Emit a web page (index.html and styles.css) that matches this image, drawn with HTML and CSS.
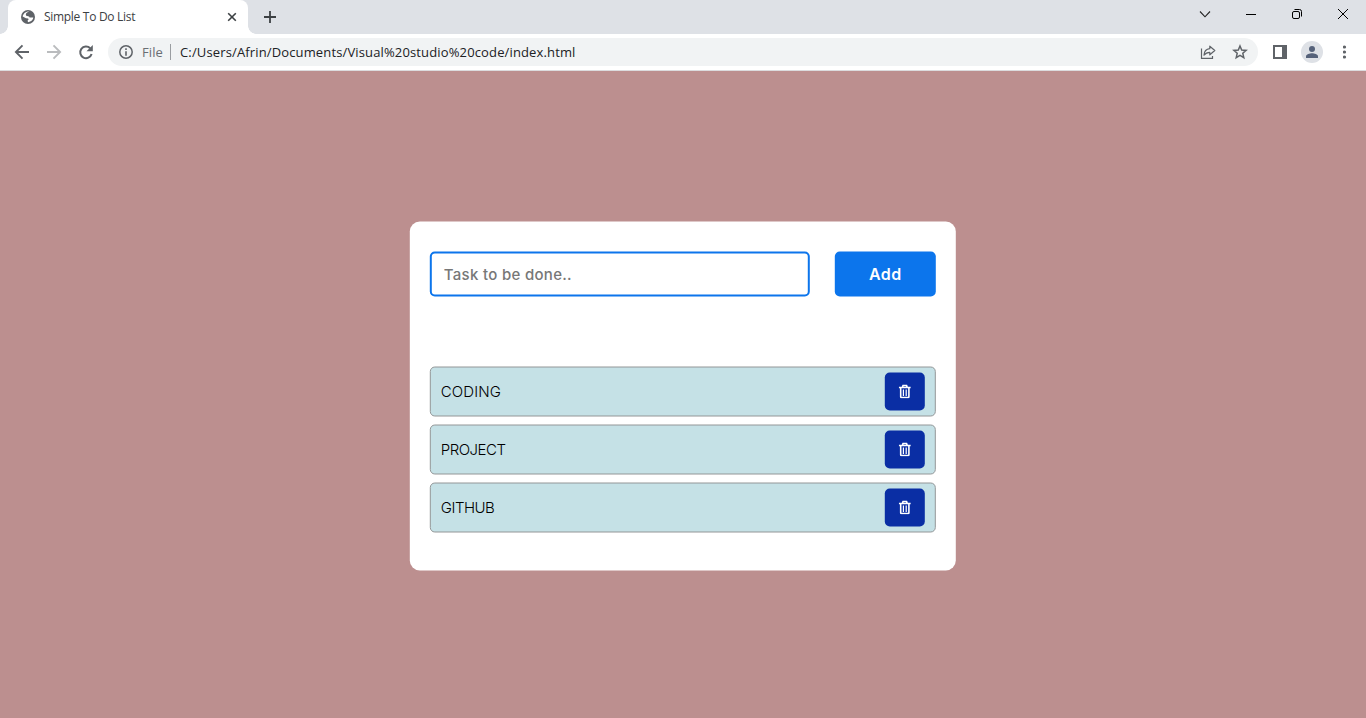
FILE: index.html
```
<!DOCTYPE html>
<html lang="en">
<head>
<meta charset="utf-8">
<title>Simple To Do List</title>
<link rel="stylesheet" href="styles.css">
</head>
<body>
<header class="tabstrip">
  <div class="tab">
    <svg class="globe" width="14" height="14" viewBox="0 0 14 14"><circle cx="7" cy="7" r="7" fill="#5f6368"/><path d="M8.3 1.6C6.5 2 5.2 3 4.8 4.2L5.2 5.8 8 6.4 8.6 7.4 12.3 7.6C12.2 9.6 10.3 12 7 12.3L6.6 10.6 7.6 9.6 7.2 8.4 5 8.3 1.7 6.6C2 4.2 4.3 1.5 8.3 1.6Z" fill="#fff"/><path d="M5.6 4.6 7 3.2 9.3 3.6 9.6 2.4 11.7 4.4 11.3 5.6 9 6.1 6.4 5.8Z" fill="#5f6368"/></svg>
    <span class="tab-title">Simple To Do List</span>
    <svg class="tab-close" width="10" height="10" viewBox="0 0 10 10"><path d="M1.2 1.2 8.8 8.8M8.8 1.2 1.2 8.8" stroke="#3c4043" stroke-width="1.6"/></svg>
  </div>
  <svg class="new-tab" width="12" height="12" viewBox="0 0 12 12"><path d="M6 0V12M0 6H12" stroke="#3c4043" stroke-width="1.8"/></svg>
  <div class="window-controls">
    <svg width="46" height="28" viewBox="0 0 46 28"><path d="M18 11.5 23 16.8 28 11.5" fill="none" stroke="#222" stroke-width="1.1"/></svg>
    <svg width="46" height="28" viewBox="0 0 46 28"><path d="M18 14.5H28" stroke="#000"/></svg>
    <svg width="46" height="28" viewBox="0 0 46 28" fill="none" stroke="#000"><rect x="18.5" y="11.5" width="7" height="7" rx="1.5"/><path d="M20.5 9.5H25.5Q27.5 9.5 27.5 11.5V16.5"/></svg>
    <svg width="46" height="28" viewBox="0 0 46 28"><path d="M18 9 28 19M28 9 18 19" stroke="#000"/></svg>
  </div>
</header>
<nav class="toolbar">
  <svg class="nav-icon" width="32" height="32" viewBox="0 0 32 32"><path d="M23 16H10.5M16.5 9.4 9.9 16 16.5 22.6" fill="none" stroke="#5f6368" stroke-width="1.9"/></svg>
  <svg class="nav-icon" width="32" height="32" viewBox="0 0 32 32"><path d="M9 16H21.5M15.5 9.4 22.1 16 15.5 22.6" fill="none" stroke="#babcbe" stroke-width="1.9"/></svg>
  <svg class="nav-icon" width="32" height="32" viewBox="0 0 32 32"><path d="M20.2 12.3A5.8 5.8 0 1 0 21.6 18" fill="none" stroke="#5f6368" stroke-width="2"/><path d="M22.8 8.9V15.2H16.5Z" fill="#5f6368"/></svg>
  <div class="omnibox">
    <svg width="14" height="14" viewBox="0 0 14 14"><circle cx="7" cy="7" r="6.2" fill="none" stroke="#5f6368" stroke-width="1.5"/><path d="M7 6.2V10.7M7 3.3V5" stroke="#5f6368" stroke-width="1.6"/></svg>
    <span class="scheme">File</span>
    <span class="divider"></span>
    <span class="url">C:/Users/Afrin/Documents/Visual%20studio%20code/index.html</span>
    <div class="omnibox-actions">
      <svg width="16" height="16" viewBox="0 0 16 16" fill="none" stroke="#5f6368" stroke-width="1.2"><path d="M1.5 4.5V14.4H12.5V12"/><path d="M9.8 2.2 14.8 6.5 9.8 10.8V8.3C7.3 8.3 5.5 9.2 4 11.2 4.2 7.7 6.2 5.1 9.8 4.7Z" stroke-linejoin="round"/></svg>
      <svg width="16" height="16" viewBox="0 0 16 16"><path d="M8 2 9.7 6.1 14.1 6.4 10.8 9.3 11.8 13.7 8 11.4 4.2 13.7 5.2 9.3 1.9 6.4 6.3 6.1Z" fill="none" stroke="#5f6368" stroke-width="1.5"/></svg>
    </div>
  </div>
  <div class="toolbar-actions">
    <svg width="14" height="14" viewBox="0 0 14 14"><path fill-rule="evenodd" d="M0 0H14V14H0ZM2 2V12H9V2Z" fill="#5f6368"/></svg>
    <svg width="22" height="22" viewBox="0 0 22 22"><circle cx="11" cy="11" r="11" fill="#dee1e6"/><circle cx="11" cy="8" r="3" fill="#56627a"/><path d="M5 17V15.3C5 13.3 8.8 12.3 11 12.3S17 13.3 17 15.3V17Z" fill="#56627a"/></svg>
    <svg width="4" height="14" viewBox="0 0 4 14" fill="#5f6368"><circle cx="1.5" cy="2" r="1.6"/><circle cx="1.5" cy="7" r="1.6"/><circle cx="1.5" cy="12" r="1.6"/></svg>
  </div>
</nav>
<main class="page">
  <section class="card">
    <form class="new-task">
      <input class="task-input" type="text" placeholder="Task to be done..">
      <button class="add" type="button">Add</button>
    </form>
    <ul class="tasks">
      <li class="task"><span class="name coding">CODING</span><button class="delete" aria-label="Delete"><svg width="12" height="14" viewBox="0 0 12 14"><path d="M0 3H12M3.6 2.8 4.3 .9H7.7L8.4 2.8M1.9 3.5V12.3Q1.9 13 2.6 13H9.4Q10.1 13 10.1 12.3V3.5" fill="none" stroke="#fff" stroke-width="1.6"/><path d="M4.6 5V11.5M7.4 5V11.5" stroke="#fff" stroke-width="1.2"/></svg></button></li>
      <li class="task"><span class="name project">PROJECT</span><button class="delete" aria-label="Delete"><svg width="12" height="14" viewBox="0 0 12 14"><path d="M0 3H12M3.6 2.8 4.3 .9H7.7L8.4 2.8M1.9 3.5V12.3Q1.9 13 2.6 13H9.4Q10.1 13 10.1 12.3V3.5" fill="none" stroke="#fff" stroke-width="1.6"/><path d="M4.6 5V11.5M7.4 5V11.5" stroke="#fff" stroke-width="1.2"/></svg></button></li>
      <li class="task"><span class="name github">GITHUB</span><button class="delete" aria-label="Delete"><svg width="12" height="14" viewBox="0 0 12 14"><path d="M0 3H12M3.6 2.8 4.3 .9H7.7L8.4 2.8M1.9 3.5V12.3Q1.9 13 2.6 13H9.4Q10.1 13 10.1 12.3V3.5" fill="none" stroke="#fff" stroke-width="1.6"/><path d="M4.6 5V11.5M7.4 5V11.5" stroke="#fff" stroke-width="1.2"/></svg></button></li>
    </ul>
  </section>
</main>
</body>
</html>
```
FILE: styles.css
```
* { box-sizing: border-box; }
body { margin: 0; height: 718px; display: flex; flex-direction: column; overflow: hidden; font-family: "Open Sans", "Noto Sans", sans-serif; }
svg { display: block; flex: none; }
.tabstrip { height: 34px; flex: none; background: #dee1e6; display: flex; align-items: flex-start; padding-left: 8px; }
.tab { position: relative; width: 240px; height: 34px; background: #fff; border-radius: 8px 8px 0 0; display: flex; align-items: center; padding: 0 11px 0 13px; }
.tab::before, .tab::after { content: ""; position: absolute; bottom: 0; width: 8px; height: 8px; }
.tab::before { left: -8px; background: radial-gradient(circle at 0 0, transparent 7.5px, #fff 8px); }
.tab::after { right: -8px; background: radial-gradient(circle at 100% 0, transparent 7.5px, #fff 8px); }
.tab-title { margin-left: 9px; padding-bottom: 2px; font-size: 12px; letter-spacing: -0.3px; color: #3c4043; white-space: nowrap; }
.tab-close { margin-left: auto; }
.new-tab { margin: 11px 0 0 16px; }
.window-controls { display: flex; margin-left: auto; }
.toolbar { height: 37px; flex: none; background: #fff; border-bottom: 1px solid #dcdcde; display: flex; align-items: center; padding: 0 19px 0 6px; }
.omnibox { flex: 1; height: 28px; margin: 0 15px 0 6px; border-radius: 14px; background: #f1f3f4; display: flex; align-items: center; padding: 0 10px 0 11px; white-space: nowrap; }
.scheme { width: 28px; margin-left: 9px; font-size: 13px; letter-spacing: 0.1px; color: #6a6e73; }
.divider { width: 1px; height: 16px; background: #9a9da1; }
.url { margin-left: 9px; font-size: 13px; letter-spacing: 0.14px; color: #202124; }
.omnibox-actions { margin-left: auto; display: flex; gap: 16px; }
.toolbar-actions { display: flex; align-items: center; gap: 14px; }
.toolbar-actions svg:last-child { margin-left: 6px; }
.page { flex: 1; background: #bc8f8f; padding-top: 151px; font-family: Inter, sans-serif; }
.card { width: 546px; height: 349px; margin: 0 auto; padding: 30px 20px; border-radius: 10px; background: #fff; transform: translate(-0.2px, -0.5px); }
.new-task { display: flex; justify-content: space-between; height: 45px; margin: 0; }
.task-input { width: 380px; height: 45px; border: 2px solid #0c75ec; border-radius: 5px; padding: 0 12px; outline: none; font: 500 15px Inter, sans-serif; letter-spacing: 0.3px; color: #222; background: #fff; }
.task-input::placeholder { color: #777; opacity: 1; }
.add { width: 101px; height: 45px; border: 0; border-radius: 5px; background: #0c75ec; color: #fff; padding: 0 0 2px; font: 600 16px Inter, sans-serif; letter-spacing: 0.4px; }
.tasks { list-style: none; margin: 70px 0 0; padding: 0; display: grid; gap: 8px; }
.task { height: 50px; border: 1px solid #939697; border-radius: 5px; background: #c5e1e6; display: flex; align-items: center; justify-content: space-between; padding: 0 10px; }
.name { padding-bottom: 2px; font-size: 15px; font-weight: 300; color: #000; }
.coding { letter-spacing: 0.1px; }
.project { letter-spacing: -0.5px; }
.github { letter-spacing: -0.5px; }
.delete { width: 40px; height: 38px; border: 0; border-radius: 5px; background: #0a2ea4; padding: 0; display: flex; align-items: center; justify-content: center; }
```
